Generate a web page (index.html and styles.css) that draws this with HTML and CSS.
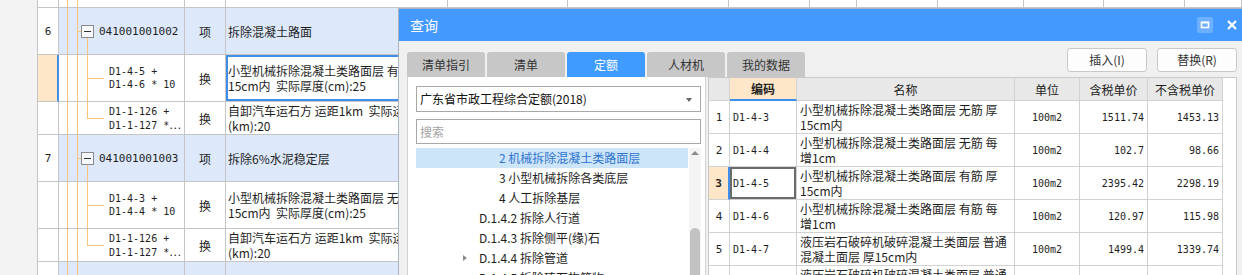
FILE: index.html
```html
<!DOCTYPE html>
<html>
<head>
<meta charset="utf-8">
<title>查询</title>
<link rel="stylesheet" href="styles.css">
</head>
<body>
<!-- the bill sheet behind the dialog -->
<div class="sheet">
    <div class="row wide">
        <div class="cell num"></div>
        <div class="cell code"></div>
        <div class="cell"></div>
        <div class="cell"></div>
        <div class="cell"></div>
        <div class="cell"></div>
        <div class="cell"></div>
        <div class="cell"></div>
        <div class="cell"></div>
        <div class="cell"></div>
        <div class="cell"></div>
        <div class="cell"></div>
        <div class="cell"></div>
    </div>

    <div class="row parent tall">
        <div class="cell num">6</div>
        <div class="cell code head"><i class="fold"></i><span class="mono">041001001002</span></div>
        <div class="cell kind">项</div>
        <div class="cell name">拆除混凝土路面</div>
    </div>
    <div class="row tall current">
        <div class="cell num"></div>
        <div class="cell code child"><span class="mono">D1-4-5 +<br>D1-4-6 * 10</span></div>
        <div class="cell kind">换</div>
        <div class="cell name focus">小型机械拆除混凝土类路面层 有筋 厚<br>15cm内&nbsp;&nbsp;实际厚度(cm):25</div>
    </div>
    <div class="row short">
        <div class="cell num"></div>
        <div class="cell code child last"><span class="mono">D1-1-126 +<br>D1-1-127 *<span class="ell">⋯</span></span></div>
        <div class="cell kind">换</div>
        <div class="cell name">自卸汽车运石方 运距1km&nbsp;&nbsp;实际运距<br>(km):20</div>
    </div>

    <div class="row parent tall">
        <div class="cell num">7</div>
        <div class="cell code head"><i class="fold"></i><span class="mono">041001001003</span></div>
        <div class="cell kind">项</div>
        <div class="cell name">拆除6%水泥稳定层</div>
    </div>
    <div class="row tall">
        <div class="cell num"></div>
        <div class="cell code child"><span class="mono">D1-4-3 +<br>D1-4-4 * 10</span></div>
        <div class="cell kind">换</div>
        <div class="cell name">小型机械拆除混凝土类路面层 无筋 厚<br>15cm内&nbsp;&nbsp;实际厚度(cm):25</div>
    </div>
    <div class="row short">
        <div class="cell num"></div>
        <div class="cell code child last"><span class="mono">D1-1-126 +<br>D1-1-127 *<span class="ell">⋯</span></span></div>
        <div class="cell kind">换</div>
        <div class="cell name">自卸汽车运石方 运距1km&nbsp;&nbsp;实际运距<br>(km):20</div>
    </div>

    <div class="row parent tall">
        <div class="cell num"></div>
        <div class="cell code"></div>
        <div class="cell kind"></div>
        <div class="cell name"></div>
    </div>
</div>

<!-- query dialog, floats over the sheet -->
<div class="dialog">
    <div class="dlg-head">
        <span class="dlg-title">查询</span>
        <span class="dlg-max">
            <svg width="16" height="16" viewBox="0 0 16 16"><rect x="4.5" y="5.5" width="7" height="5" fill="none" stroke="#fff" stroke-width="1.6"/><rect x="4" y="4.6" width="8" height="1.6" fill="#fff"/></svg>
        </span>
        <span class="dlg-close">
            <svg width="10" height="10" viewBox="0 0 10 10"><path d="M1 1 L9 9 M9 1 L1 9" stroke="#fff" stroke-width="2.2"/></svg>
        </span>
    </div>

    <div class="dlg-body">
        <div class="toolbar">
            <div class="tabs">
                <span class="tab">清单指引</span>
                <span class="tab">清单</span>
                <span class="tab active">定额</span>
                <span class="tab">人材机</span>
                <span class="tab">我的数据</span>
            </div>
            <div class="actions">
                <span class="btn">插入(I)</span>
                <span class="btn">替换(R)</span>
            </div>
        </div>

        <div class="main">
            <div class="lib">
                <div class="select">广东省市政工程综合定额(2018)<i class="caret"></i></div>
                <div class="search">搜索</div>
                <div class="tree">
                    <ul class="tree-list">
                        <li class="lv3 sel">2 机械拆除混凝土类路面层</li>
                        <li class="lv3">3 小型机械拆除各类底层</li>
                        <li class="lv3">4 人工拆除基层</li>
                        <li class="lv2">D.1.4.2 拆除人行道</li>
                        <li class="lv2">D.1.4.3 拆除侧平(缘)石</li>
                        <li class="lv2 closed">D.1.4.4 拆除管道</li>
                        <li class="lv2">D.1.4.5 拆除砖石构筑物</li>
                    </ul>
                    <div class="vscroll"><i class="up"></i><i class="thumb"></i></div>
                </div>
            </div>

            <div class="result">
                <div class="grid">
                    <div class="th"></div>
                    <div class="th code-h">编码</div>
                    <div class="th">名称</div>
                    <div class="th">单位</div>
                    <div class="th">含税单价</div>
                    <div class="th">不含税单价</div>

                    <div class="td idx">1</div>
                    <div class="td mono">D1-4-3</div>
                    <div class="td txt">小型机械拆除混凝土类路面层 无筋 厚<br>15cm内</div>
                    <div class="td unit mono">100m2</div>
                    <div class="td price mono">1511.74</div>
                    <div class="td price mono">1453.13</div>

                    <div class="td idx">2</div>
                    <div class="td mono">D1-4-4</div>
                    <div class="td txt">小型机械拆除混凝土类路面层 无筋 每<br>增1cm</div>
                    <div class="td unit mono">100m2</div>
                    <div class="td price mono">102.7</div>
                    <div class="td price mono">98.66</div>

                    <div class="td idx on">3</div>
                    <div class="td mono cur">D1-4-5</div>
                    <div class="td txt">小型机械拆除混凝土类路面层 有筋 厚<br>15cm内</div>
                    <div class="td unit mono">100m2</div>
                    <div class="td price mono">2395.42</div>
                    <div class="td price mono">2298.19</div>

                    <div class="td idx">4</div>
                    <div class="td mono">D1-4-6</div>
                    <div class="td txt">小型机械拆除混凝土类路面层 有筋 每<br>增1cm</div>
                    <div class="td unit mono">100m2</div>
                    <div class="td price mono">120.97</div>
                    <div class="td price mono">115.98</div>

                    <div class="td idx">5</div>
                    <div class="td mono">D1-4-7</div>
                    <div class="td txt">液压岩石破碎机破碎混凝土类面层 普通<br>混凝土面层 厚15cm内</div>
                    <div class="td unit mono">100m2</div>
                    <div class="td price mono">1499.4</div>
                    <div class="td price mono">1339.74</div>

                    <div class="td idx">6</div>
                    <div class="td mono">D1-4-8</div>
                    <div class="td txt">液压岩石破碎机破碎混凝土类面层 普通<br>混凝土面层 每增1cm</div>
                    <div class="td unit mono">100m2</div>
                    <div class="td price mono">86.35</div>
                    <div class="td price mono">77.16</div>
                </div>
            </div>
        </div>
    </div>
</div>
</body>
</html>
```

FILE: styles.css
```css
html, body {
    margin: 0;
    height: 275px;
    overflow: hidden;
}

body {
    position: relative;
    background: #f3f3f3;
    font-family: "Noto Sans CJK SC", "Microsoft YaHei", sans-serif;
    font-size: 12px;
    color: #1e1e1e;
}

.mono { /*the codes and numbers are in a narrow fixed font*/
    font-family: "DejaVu Sans Mono", "Noto Sans CJK SC", monospace;
    font-size: 10px;
}

.ell { /*full width ellipsis, like the truncated cell shows*/
    font-family: "Noto Sans CJK SC", sans-serif;
    font-size: 11px;
}

/**The sheet behind**/

.sheet {
    margin-left: 37px;
    border-left: 1px solid #c5c5c5;
}

.row {
    display: grid;
    grid-template-columns: 21px 126px 41px 1fr;
    height: 47px;
}

.row.wide { /*only the sliver at the top shows the far columns*/
    grid-template-columns: 21px 126px 41px 222px 120px 161px 81px 47px 81px 86px 80px 81px 1fr;
    height: 8px;
}

.row.short { height: 33px; }

.cell {
    box-sizing: border-box;
    border-right: 1px solid #c5c5c5;
    border-bottom: 1px solid #c5c5c5;
    background: #fff;
    display: flex;
    align-items: center;
    overflow: hidden;
    white-space: nowrap;
}

.row.parent .cell { background-color: #dde9fb; }
.row.parent .cell.num { background-color: #fff; }

.num {
    justify-content: center;
    font-family: "DejaVu Sans Mono", monospace;
    font-size: 11px;
}

.row.current .num {
    background: #fee7c9;
    border-right: 2px solid #3d8fe9;
}

.kind { justify-content: center; }

.name {
    padding-left: 2px;
    line-height: 15px;
}

.name.focus { box-shadow: inset 0 0 0 2px #3d8fe9; }

/*tree lines are backgrounds, the two outer guides run through every row*/
.code {
    background-image: linear-gradient(#fec57a, #fec57a), linear-gradient(#fec57a, #fec57a);
    background-position: 8px 0, 18px 0;
    background-size: 1px 100%, 1px 100%;
    background-repeat: no-repeat;
}

.code.head {
    background-image: linear-gradient(#fec57a, #fec57a), linear-gradient(#fec57a, #fec57a),
                      linear-gradient(#fec57a, #fec57a), linear-gradient(#fec57a, #fec57a);
    background-position: 8px 0, 18px 0, 18px 50%, 28px 100%;
    background-size: 1px 100%, 1px 100%, 4px 1px, 1px 50%;
}

.code.head .mono { font-size: 11px; }

.code.child {
    padding-left: 50px;
    line-height: 13px;
    background-image: linear-gradient(#fec57a, #fec57a), linear-gradient(#fec57a, #fec57a),
                      linear-gradient(#fec57a, #fec57a), linear-gradient(#fec57a, #fec57a);
    background-position: 8px 0, 18px 0, 28px 0, 28px 50%;
    background-size: 1px 100%, 1px 100%, 1px 100%, 17px 1px;
}

.code.child.last { background-size: 1px 100%, 1px 100%, 1px 50%, 17px 1px; }

.fold {
    position: relative;
    box-sizing: border-box;
    width: 13px;
    height: 13px;
    margin: 0 5px 0 22px;
    border: 1px solid #8a8a8a;
    background: #f6f8fc;
}

.fold::before {
    content: "";
    position: absolute;
    left: 2px;
    right: 2px;
    top: 5px;
    height: 1px;
    background: #333;
}

/**Dialog**/

.dialog {
    position: absolute;
    left: 398px;
    top: 8px;
    width: 850px;
    height: 290px;
    box-sizing: border-box;
    border: 1px solid #a9b4c2;
    background: #f0f0f0;
}

.dlg-head {
    height: 32px;
    background: #4499ff;
    display: flex;
    align-items: center;
    color: #fff;
}

.dlg-title {
    padding-left: 11px;
    font-size: 14px;
}

.dlg-max {
    margin-left: auto;
    width: 16px;
    height: 16px;
    border-radius: 2px;
    background: #6db0ff;
}

.dlg-max svg, .dlg-close svg { display: block; }

.dlg-close {
    margin: 0 10px 0 14px;
}

.dlg-body {
    padding: 7px 10px 0 8px;
}

.toolbar {
    display: flex;
    height: 29px;
}

.tabs {
    align-self: flex-end;
    display: flex;
    gap: 2px;
}

.tab {
    width: 78px;
    height: 25px;
    line-height: 25px;
    text-align: center;
    border-radius: 3px 3px 0 0;
    background: #c7c7c7;
    color: #333;
}

.tab.active {
    background: #3f9bff;
    color: #fff;
}

.actions {
    margin-left: auto;
    display: flex;
    gap: 10px;
}

.btn {
    box-sizing: border-box;
    width: 80px;
    height: 24px;
    line-height: 22px;
    text-align: center;
    border: 1px solid #c9c9c9;
    border-radius: 3px;
    background: #fdfdfd;
    color: #333;
}

.main {
    display: flex;
    gap: 2px;
}

/*left: quota library tree*/
.lib {
    box-sizing: border-box;
    width: 299px;
    height: 210px;
    padding: 9px 4px 0 8px;
    border-left: 1px solid #d2d2d2;
    border-right: 1px solid #d2d2d2;
    background: #fff;
}

.select, .search {
    position: relative;
    box-sizing: border-box;
    border: 1px solid #a8a8a8;
    padding-left: 3px;
}

.select {
    height: 26px;
    line-height: 24px;
    color: #111;
}

.caret {
    position: absolute;
    right: 8px;
    top: 11px;
    border: 3px solid transparent;
    border-top: 4px solid #666;
}

.search {
    height: 25px;
    line-height: 23px;
    margin-top: 7px;
    color: #a3a3a3;
}

.tree {
    display: flex;
    margin-top: 4px;
    height: 140px;
}

.tree-list {
    flex: 1;
    margin: 0;
    padding: 0;
    list-style: none;
}

.tree-list li {
    position: relative;
    height: 20px;
    line-height: 20px;
    white-space: nowrap;
}

.lv3 { padding-left: 83px; }
.lv2 { padding-left: 63px; }

.tree-list .sel {
    background: #cce5f8;
    color: #2f73d0;
}

.closed::before { /*small expand arrow*/
    content: "";
    position: absolute;
    left: 47px;
    top: 7px;
    border: 3px solid transparent;
    border-left: 4px solid #8a8a8a;
}

.vscroll {
    position: relative;
    width: 12px;
    margin-left: 1px;
    background: #f4f4f4;
}

.vscroll .up {
    position: absolute;
    left: 2px;
    top: 3px;
    border: 4px solid transparent;
    border-bottom: 4px solid #8c8c8c;
    border-top-width: 0;
}

.vscroll .thumb {
    position: absolute;
    left: 1px;
    right: 1px;
    top: 80px;
    height: 80px;
    border-radius: 5px;
    background: #c2c2c2;
}

/*right: result list*/
.result {
    box-sizing: border-box;
    width: 529px;
    height: 210px;
    border: 1px solid #c8c8c8;
    background: #fff;
    overflow: hidden;
}

.grid {
    display: grid;
    grid-template-columns: 21px 67px 218px 65px 68px 75px;
    grid-template-rows: 23px;
    grid-auto-rows: 33px;
    width: 514px;
}

.th, .td {
    box-sizing: border-box;
    border-right: 1px solid #d2d2d2;
    border-bottom: 1px solid #d2d2d2;
    display: flex;
    align-items: center;
    overflow: hidden;
    white-space: nowrap;
}

.th {
    justify-content: center;
    background: #e8e8e8;
    color: #222;
}

.th.code-h {
    background: #fee7c9;
    font-weight: bold;
    border-bottom: 2px solid #3d8fe9;
}

.td { padding: 0 3px; }

.td.idx {
    justify-content: center;
    padding: 0;
    font-family: "DejaVu Sans Mono", monospace;
    font-size: 11px;
}

.td.idx.on {
    background: #fee7c9;
    font-weight: bold;
    border-right: 2px solid #3d8fe9;
}

.td.cur { box-shadow: inset 0 0 0 2px #6b6b6b; }

.td.txt { line-height: 15px; }

.td.unit { justify-content: center; }

.td.price { justify-content: flex-end; }
```
